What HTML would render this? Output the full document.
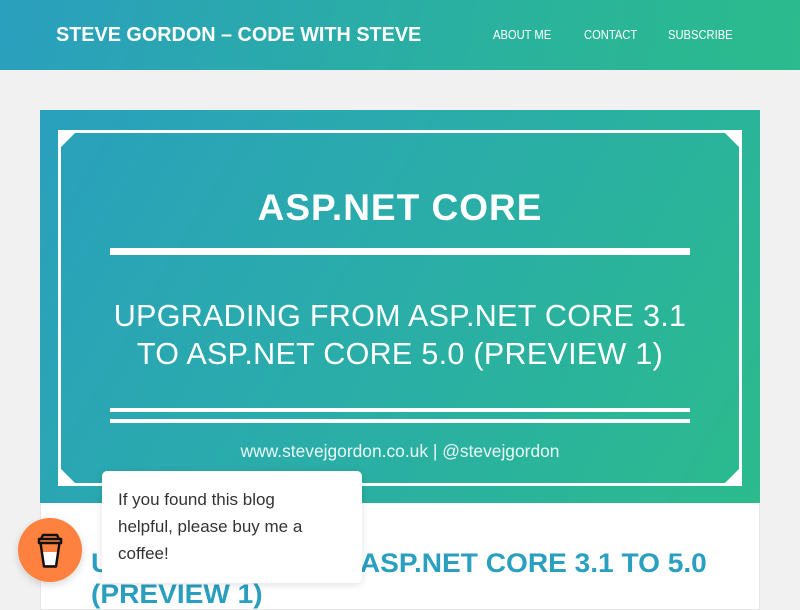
<!DOCTYPE html>
<html><head><meta charset="utf-8"><style>
*{margin:0;padding:0;box-sizing:border-box}
body{width:800px;height:600px;overflow:hidden;background:#f1f1f1;font-family:"Liberation Sans",sans-serif;position:relative}
.hdr{position:absolute;left:0;top:0;width:800px;height:70px;background:linear-gradient(100deg,#2a9fbe 0%,#2ab49a 70%,#2bbb8c 100%)}
.logo{position:absolute;left:56px;top:24px;color:#fff;font-weight:bold;font-size:20px;transform:scaleX(.99);transform-origin:left}
.nav{position:absolute;top:27px;color:#fff;font-size:13px;transform:scaleX(.86);transform-origin:left}
.card{position:absolute;left:40px;top:110px;width:720px;height:500px;background:#fff;border:1px solid #e6e6e6}
.img{position:absolute;left:40px;top:110px;width:720px;height:393px;background:linear-gradient(120deg,#29a0bd 0%,#2aacaa 45%,#2bbb8c 100%)}
.frame{position:absolute;left:18px;top:20px;width:684px;height:356px;border:3px solid #fff}
.tri{position:absolute;width:0;height:0}
.w{position:absolute;color:#fff;text-align:center;left:0;width:720px}
.bar{position:absolute;background:#fff;left:70px;width:580px}
.title{position:absolute;left:91px;top:548px;color:#2a9fc0;font-weight:bold;font-size:27px;line-height:31px;transform:scaleX(1.04);transform-origin:left}
.tip{position:absolute;left:102px;top:471px;width:260px;height:112px;background:#fff;border-radius:5px;box-shadow:0 2px 8px rgba(0,0,0,.12);padding:15px 42px 15px 16px;color:#333;font-size:17px;line-height:27px}
.cup{position:absolute;left:18px;top:518px;width:64px;height:64px;border-radius:50%;background:#ff813f;box-shadow:0 3px 8px rgba(0,0,0,.15)}
</style></head><body>
<div class="hdr">
<div class="logo">STEVE GORDON – CODE WITH STEVE</div>
<div class="nav" style="left:493px">ABOUT ME</div>
<div class="nav" style="left:584px">CONTACT</div>
<div class="nav" style="left:668px">SUBSCRIBE</div>
</div>
<div class="card"></div>
<div class="img">
<div class="frame"></div>
<div class="tri" style="left:21px;top:23px;border-top:14px solid #fff;border-right:14px solid transparent"></div>
<div class="tri" style="left:685px;top:23px;border-top:14px solid #fff;border-left:14px solid transparent"></div>
<div class="tri" style="left:21px;top:359px;border-bottom:14px solid #fff;border-right:14px solid transparent"></div>
<div class="tri" style="left:685px;top:359px;border-bottom:14px solid #fff;border-left:14px solid transparent"></div>
<div class="w" style="top:77px;font-size:37px;font-weight:bold;letter-spacing:1px">ASP.NET CORE</div>
<div class="bar" style="top:138px;height:7px"></div>
<div class="w" style="top:187px;font-size:30.5px;line-height:38px;letter-spacing:0.3px">UPGRADING FROM ASP.NET CORE 3.1<br>TO ASP.NET CORE 5.0 (PREVIEW 1)</div>
<div class="bar" style="top:298px;height:4px"></div>
<div class="bar" style="top:309px;height:4px"></div>
<div class="w" style="top:331px;font-size:17.4px;opacity:.9">www.stevejgordon.co.uk | @stevejgordon</div>
</div>
<div class="title">UPGRADING FROM ASP.NET CORE 3.1 TO 5.0<br>(PREVIEW 1)</div>
<div class="tip">If you found this blog helpful, please buy me a coffee!</div>
<div class="cup"><svg width="64" height="64" viewBox="0 0 64 64"><path d="M25 34l1.5 13h11L39 34z" fill="#fff"/><path d="M22.5 25l3.5 23.5h12l3.5-23.5" stroke="#111" stroke-width="2.5" fill="none" stroke-linejoin="round"/><path d="M21 21h22v4H21zM25 17h14l2 4H23z" stroke="#111" stroke-width="2.5" fill="none" stroke-linejoin="round"/></svg></div>
</body></html>
